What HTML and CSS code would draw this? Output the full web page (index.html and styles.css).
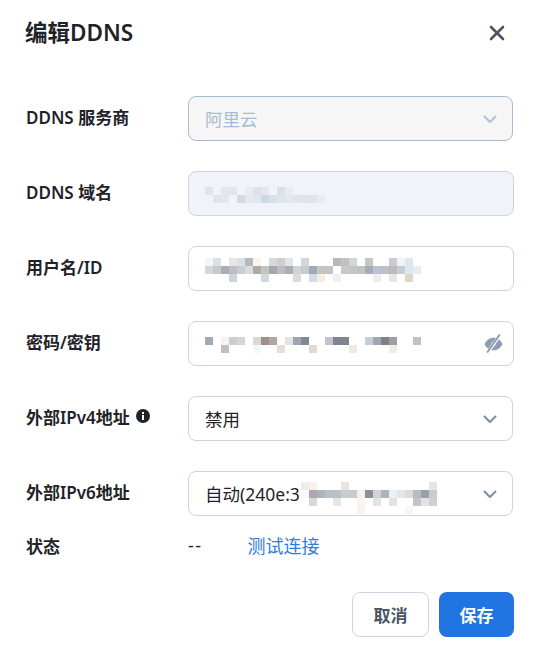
FILE: index.html
```html
<!DOCTYPE html>
<html lang="en">
<head>
    <meta charset="UTF-8">
    <meta name="viewport" content="width=device-width, initial-scale=1.0">
    <title>编辑DDNS</title>
    <link rel="stylesheet" href="styles.css">
</head>
<body>
<div class="dialog">
    <div class="dialog-header">
        <h1>编辑DDNS</h1>
        <svg class="close-icon" viewBox="0 0 16 16"><path d="M2 2l12 12M14 2L2 14"/></svg>
    </div>

    <form class="form">
        <div class="row">
            <label>DDNS 服务商</label>
            <div class="field select disabled">
                <span>阿里云</span>
                <svg class="chevron" viewBox="0 0 14 8"><path d="M1 1l6 6 6-6"/></svg>
            </div>
        </div>

        <div class="row">
            <label>DDNS 域名</label>
            <div class="field input readonly">
                <svg class="mosaic mosaic-domain" viewBox="0 0 16 2" shape-rendering="crispEdges">
                    <rect x="0" y="0" width="1" height="1" fill="#dfe4ea"/><rect x="2" y="0" width="2" height="1" fill="#e2e6ee"/><rect x="5" y="0" width="1" height="1" fill="#e8ecf2"/><rect x="6" y="0" width="1" height="1" fill="#dde2ea"/><rect x="7" y="0" width="1" height="1" fill="#e4e8ee"/><rect x="9" y="0" width="1" height="1" fill="#dae0e8"/><rect x="10" y="0" width="1" height="1" fill="#e8ecf2"/>
                    <rect x="1" y="1" width="1" height="1" fill="#e0e4ea"/><rect x="2" y="1" width="1" height="1" fill="#e4e8ee"/><rect x="4" y="1" width="1" height="1" fill="#d4dae4"/><rect x="5" y="1" width="1" height="1" fill="#e4e8f0"/><rect x="6" y="1" width="1" height="1" fill="#e0e6ee"/><rect x="7" y="1" width="1" height="1" fill="#ccd8e4"/><rect x="8" y="1" width="1" height="1" fill="#d8e0ea"/><rect x="9" y="1" width="1" height="1" fill="#dfe5ec"/><rect x="10" y="1" width="1" height="1" fill="#e4e8ee"/><rect x="11" y="1" width="1" height="1" fill="#e0e6ec"/><rect x="12" y="1" width="2" height="1" fill="#e0e4ea"/><rect x="14" y="1" width="1" height="1" fill="#e8ecf2"/>
                </svg>
            </div>
        </div>

        <div class="row">
            <label>用户名/ID</label>
            <div class="field input">
                <svg class="mosaic mosaic-user" viewBox="0 0 27 3" shape-rendering="crispEdges">
                    <rect x="0" y="0" width="1" height="1" fill="#f5f6f8"/><rect x="1" y="0" width="1" height="1" fill="#dcdfe3"/><rect x="3" y="0" width="1" height="1" fill="#e8e6e6"/><rect x="4" y="0" width="1" height="1" fill="#dde0e3"/><rect x="5" y="0" width="1" height="1" fill="#b3b9bf"/><rect x="6" y="0" width="1" height="1" fill="#faf6ee"/><rect x="8" y="0" width="1" height="1" fill="#d8d8da"/><rect x="9" y="0" width="1" height="1" fill="#cfcfcf"/><rect x="10" y="0" width="1" height="1" fill="#e0e4e8"/><rect x="12" y="0" width="1" height="1" fill="#d0d6da"/><rect x="16" y="0" width="1" height="1" fill="#b8b8ba"/><rect x="17" y="0" width="1" height="1" fill="#c4c0c2"/><rect x="18" y="0" width="1" height="1" fill="#d4d6d6"/><rect x="20" y="0" width="1" height="1" fill="#c4c6c8"/><rect x="23" y="0" width="1" height="1" fill="#c8ccd0"/><rect x="24" y="0" width="1" height="1" fill="#f0f4f8"/><rect x="25" y="0" width="1" height="1" fill="#dfe6ee"/>
                    <rect x="0" y="1" width="1" height="1" fill="#d4d8dc"/><rect x="1" y="1" width="1" height="1" fill="#c8c8ca"/><rect x="2" y="1" width="1" height="1" fill="#a8adb4"/><rect x="3" y="1" width="1" height="1" fill="#c0bcc4"/><rect x="4" y="1" width="1" height="1" fill="#c4ced6"/><rect x="5" y="1" width="1" height="1" fill="#d4dde0"/><rect x="6" y="1" width="1" height="1" fill="#b0aaa0"/><rect x="7" y="1" width="1" height="1" fill="#c4c4c4"/><rect x="8" y="1" width="1" height="1" fill="#a4a8ac"/><rect x="9" y="1" width="1" height="1" fill="#bcbcc8"/><rect x="10" y="1" width="1" height="1" fill="#b0aeaa"/><rect x="11" y="1" width="1" height="1" fill="#ccd4d8"/><rect x="12" y="1" width="1" height="1" fill="#c4ccd0"/><rect x="13" y="1" width="1" height="1" fill="#9cacbc"/><rect x="14" y="1" width="1" height="1" fill="#ccc4bc"/><rect x="15" y="1" width="1" height="1" fill="#c4c4c4"/><rect x="17" y="1" width="1" height="1" fill="#c8c8ca"/><rect x="18" y="1" width="1" height="1" fill="#c4c4c6"/><rect x="19" y="1" width="1" height="1" fill="#c0c4c4"/><rect x="20" y="1" width="1" height="1" fill="#a8acb4"/><rect x="21" y="1" width="1" height="1" fill="#c0c0d4"/><rect x="22" y="1" width="1" height="1" fill="#bcc0c4"/><rect x="23" y="1" width="1" height="1" fill="#b8bcbc"/><rect x="24" y="1" width="1" height="1" fill="#c8ccd0"/><rect x="25" y="1" width="1" height="1" fill="#dde8f0"/><rect x="26" y="1" width="1" height="1" fill="#e4eef4"/>
                    <rect x="3" y="2" width="1" height="1" fill="#ccd4da"/><rect x="7" y="2" width="1" height="1" fill="#d0d8e0"/><rect x="11" y="2" width="1" height="1" fill="#d8dce0"/><rect x="13" y="2" width="1" height="1" fill="#d8dce0"/><rect x="14" y="2" width="1" height="1" fill="#f6ece0"/><rect x="16" y="2" width="1" height="1" fill="#f0f0f2"/><rect x="21" y="2" width="1" height="1" fill="#eeeeef"/><rect x="23" y="2" width="1" height="1" fill="#e4e8ec"/><rect x="25" y="2" width="1" height="1" fill="#e4d4c8"/>
                </svg>
            </div>
        </div>

        <div class="row">
            <label>密码/密钥</label>
            <div class="field input">
                <svg class="mosaic mosaic-pass" viewBox="0 0 27 2" shape-rendering="crispEdges">
                    <rect x="0" y="0" width="1" height="1" fill="#a0aab8"/><rect x="2" y="0" width="1" height="1" fill="#f4f4f4"/><rect x="3" y="0" width="1" height="1" fill="#d0ccc8"/><rect x="4" y="0" width="1" height="1" fill="#d8d4d0"/><rect x="6" y="0" width="1" height="1" fill="#dcd8d4"/><rect x="7" y="0" width="1" height="1" fill="#a09088"/><rect x="8" y="0" width="1" height="1" fill="#b0a8a0"/><rect x="10" y="0" width="1" height="1" fill="#e4e4e4"/><rect x="11" y="0" width="1" height="1" fill="#a0a4b0"/><rect x="12" y="0" width="1" height="1" fill="#808894"/><rect x="15" y="0" width="1" height="1" fill="#c0c4cc"/><rect x="16" y="0" width="2" height="1" fill="#808490"/><rect x="20" y="0" width="1" height="1" fill="#c8ced6"/><rect x="21" y="0" width="1" height="1" fill="#a0a8b4"/><rect x="22" y="0" width="1" height="1" fill="#808088"/><rect x="23" y="0" width="1" height="1" fill="#a0a0a4"/><rect x="26" y="0" width="1" height="1" fill="#c4c0c0"/>
                    <rect x="2" y="1" width="1" height="1" fill="#c0c0c0"/><rect x="6" y="1" width="1" height="1" fill="#f4f8fa"/><rect x="9" y="1" width="1" height="1" fill="#e4dedc"/><rect x="13" y="1" width="1" height="1" fill="#e0d8d4"/><rect x="18" y="1" width="1" height="1" fill="#f0e8e4"/><rect x="23" y="1" width="1" height="1" fill="#f4ece8"/>
                </svg>
                <svg class="eye-icon" viewBox="0 0 18 18">
                    <path class="eye-fill" d="M.5 9.5C2.2 5.8 5.4 3.5 9 3.500s6.800 2.300 8.500 6C15.800 13.200 12.600 15.500 9 15.500S2.200 13.200 .5 9.500z"/>
                    <circle class="eye-pupil" cx="9" cy="9.500" r="2"/>
                    <path class="eye-slash-gap" d="M15.500 .5L3.500 17.500"/>
                    <path class="eye-slash" d="M15 .5L3 17.500"/>
                </svg>
            </div>
        </div>

        <div class="row">
            <label>外部IPv4地址
                <svg class="info-icon" viewBox="0 0 14 14"><circle cx="7" cy="7" r="7"/><rect class="info-mark" x="6" y="6" width="2" height="5"/><rect class="info-mark" x="6" y="3" width="2" height="2"/></svg>
            </label>
            <div class="field select">
                <span>禁用</span>
                <svg class="chevron" viewBox="0 0 14 8"><path d="M1 1l6 6 6-6"/></svg>
            </div>
        </div>

        <div class="row last-field">
            <label>外部IPv6地址</label>
            <div class="field select">
                <span class="ipv6-text">自动(240e:3</span>
                <svg class="mosaic mosaic-ipv6" viewBox="0 0 17 4" shape-rendering="crispEdges">
                    <rect x="0" y="0" width="1" height="1" fill="#f0ecea"/><rect x="1" y="0" width="1" height="1" fill="#f8f0ea"/><rect x="5" y="0" width="1" height="1" fill="#e8e4e0"/><rect x="16" y="0" width="1" height="1" fill="#e4e6e8"/>
                    <rect x="0" y="1" width="1" height="1" fill="#fafafa"/><rect x="1" y="1" width="1" height="1" fill="#b0a8b0"/><rect x="2" y="1" width="1" height="1" fill="#a8b4c0"/><rect x="3" y="1" width="2" height="1" fill="#b8c0c8"/><rect x="5" y="1" width="1" height="1" fill="#c8cccc"/><rect x="6" y="1" width="1" height="1" fill="#c8ccd0"/><rect x="7" y="1" width="1" height="1" fill="#f8f0ea"/><rect x="8" y="1" width="1" height="1" fill="#8c9098"/><rect x="9" y="1" width="1" height="1" fill="#d0d4d6"/><rect x="10" y="1" width="1" height="1" fill="#b0b4b8"/><rect x="11" y="1" width="1" height="1" fill="#e4f2fa"/><rect x="12" y="1" width="1" height="1" fill="#e8e4e0"/><rect x="13" y="1" width="1" height="1" fill="#dcdcdc"/><rect x="14" y="1" width="1" height="1" fill="#b8bcc0"/><rect x="15" y="1" width="1" height="1" fill="#9ca0ac"/><rect x="16" y="1" width="1" height="1" fill="#c8ccd0"/>
                    <rect x="1" y="2" width="1" height="1" fill="#d8d8d8"/><rect x="4" y="2" width="1" height="1" fill="#e4e8ec"/><rect x="7" y="2" width="1" height="1" fill="#fcf4ee"/><rect x="9" y="2" width="1" height="1" fill="#e0e4e6"/><rect x="11" y="2" width="1" height="1" fill="#e0e4e4"/><rect x="14" y="2" width="1" height="1" fill="#c8c4c4"/><rect x="15" y="2" width="1" height="1" fill="#e0e4e8"/><rect x="16" y="2" width="1" height="1" fill="#d0d0d0"/>
                    <rect x="7" y="3" width="1" height="1" fill="#f4f4f4"/><rect x="13" y="3" width="1" height="1" fill="#f8f6f6"/>
                </svg>
                <svg class="chevron" viewBox="0 0 14 8"><path d="M1 1l6 6 6-6"/></svg>
            </div>
        </div>

        <div class="row status-row">
            <label>状态</label>
            <div class="status-value">
                <span class="status-text">--</span>
                <a class="test-link">测试连接</a>
            </div>
        </div>

        <div class="actions">
            <button type="button" class="button cancel">取消</button>
            <button type="button" class="button save">保存</button>
        </div>
    </form>
</div>
</body>
</html>
```

FILE: styles.css
```css
body {
    font-family: "Noto Sans", "Noto Sans CJK SC", sans-serif;
    margin: 0;
    background-color: #fff;
    color: #1f2329;
}
.dialog {
    padding: 19px 24px 18px 26px;
}
.dialog-header {
    display: flex;
    justify-content: space-between;
    align-items: center;
    height: 28px;
    margin-bottom: 49px;
}
h1 {
    margin: 0 0 0 -1px;
    font-size: 22.5px;
    font-weight: 600;
    line-height: 28px;
    color: #1f2329;
}
.close-icon {
    width: 16px;
    height: 16px;
    margin-right: 9px;
    fill: none;
    stroke: #4b5563;
    stroke-width: 2.6;
    stroke-linecap: round;
}
.row {
    display: flex;
    align-items: center;
    height: 45px;
    margin-bottom: 30px;
}
.row.last-field {
    margin-bottom: 0;
}
.row label {
    display: flex;
    align-items: center;
    gap: 6px;
    width: 162px;
    flex: none;
    padding-bottom: 5px;
    font-size: 17px;
    font-weight: 600;
    white-space: nowrap;
}
.field {
    display: flex;
    align-items: center;
    box-sizing: border-box;
    width: 326px;
    height: 45px;
    padding: 0 16px;
    border: 1px solid #cbd5e1;
    border-radius: 8px;
    font-size: 17.5px;
}
.field.select {
    width: 325px;
}
.field.select .chevron {
    margin-left: auto;
}
.field.disabled {
    background-color: #f6f6f6;
    border-color: #a9bbd1;
    color: #a9bbd1;
}
.field.readonly {
    background-color: #f0f3f8;
}
.chevron {
    width: 14px;
    height: 8px;
    margin-right: -1px;
    fill: none;
    stroke: #8292a6;
    stroke-width: 2.2;
}
.disabled .chevron {
    stroke: #b4c3d4;
}
.mosaic {
    flex: none;
}
.mosaic-domain {
    width: 128px;
    height: 16px;
    margin-top: 2px;
}
.mosaic-user {
    width: 216px;
    height: 24px;
    margin-top: 3px;
}
.mosaic-pass {
    width: 216px;
    height: 16px;
    margin-top: 3px;
}
.mosaic-ipv6 {
    width: 136px;
    height: 32px;
    margin-top: 8px;
}
.ipv6-text {
    width: 96px;
    flex: none;
    white-space: nowrap;
}
.eye-icon {
    width: 19px;
    height: 19px;
    margin-left: auto;
    margin-right: -6px;
}
.eye-fill {
    fill: #8e9db0;
}
.eye-pupil {
    fill: #fff;
}
.eye-slash-gap {
    stroke: #fff;
    stroke-width: 3;
}
.eye-slash {
    stroke: #8e9db0;
    stroke-width: 1.8;
}
.info-icon {
    width: 14px;
    height: 14px;
    fill: #1f2329;
}
.info-mark {
    fill: #fff;
}
.status-row {
    height: 24px;
    margin: 0;
    padding-top: 17px;
}
.status-row label {
    padding-bottom: 0;
}
.status-value {
    display: flex;
    align-items: center;
    gap: 45px;
    font-size: 18px;
}
.status-text {
    letter-spacing: 1.5px;
}
.test-link {
    color: #2f7de1;
    cursor: pointer;
}
.actions {
    display: flex;
    justify-content: flex-end;
    gap: 10px;
    margin-top: 35px;
}
.button {
    height: 45px;
    padding: 0;
    border-radius: 8px;
    font-family: inherit;
    font-size: 17px;
    font-weight: 700;
    cursor: pointer;
}
.cancel {
    width: 77px;
    background-color: #fff;
    border: 1px solid #cbd5e1;
    color: #4b5563;
}
.save {
    width: 75px;
    background-color: #2175e2;
    border: none;
    color: #fff;
}
```
